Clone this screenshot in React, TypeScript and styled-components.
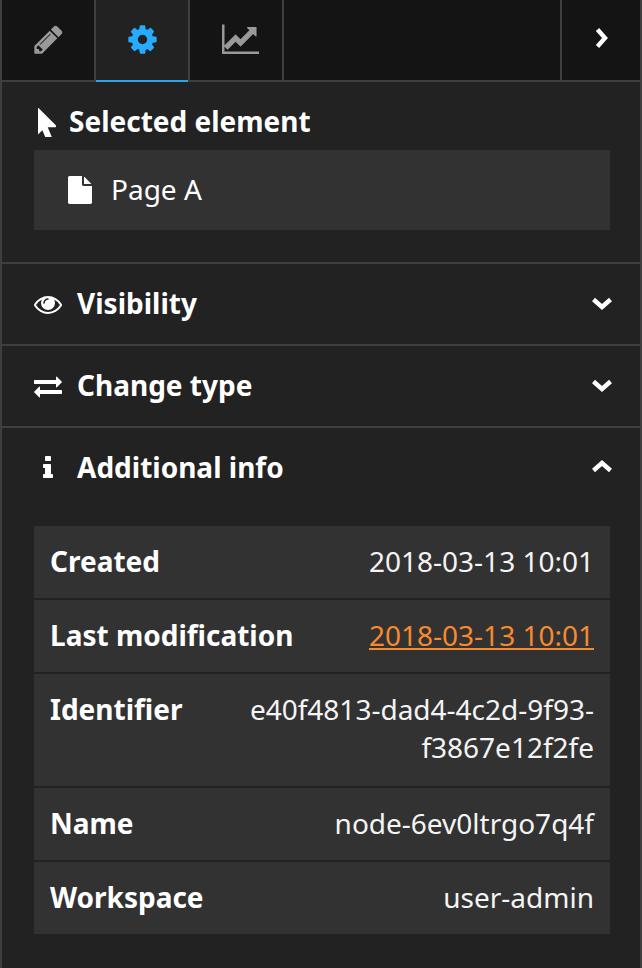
import React from "react";
import styled, { createGlobalStyle } from "styled-components";

const Global = createGlobalStyle`
  html, body { margin: 0; padding: 0; background: #222; }
  body { font-family: "Noto Sans", sans-serif; color: #fff; }
  * { box-sizing: border-box; }
`;

const Panel = styled.div`
  width: 642px;
  height: 968px;
  background: #222;
  border-left: 2px solid #3f3f3f;
  border-right: 2px solid #3f3f3f;
  overflow: hidden;
`;

const TabBar = styled.div`
  display: flex;
  height: 82px;
  background: #141414;
  border-bottom: 2px solid #3f3f3f;
`;

const Tab = styled.div<{ $active?: boolean }>`
  position: relative;
  width: 94px;
  height: 80px;
  padding-bottom: 2px;
  display: flex;
  align-items: center;
  justify-content: center;
  border-right: 2px solid #3f3f3f;
  background: ${(p) => (p.$active ? "#222" : "#141414")};
  color: ${(p) => (p.$active ? "#26acff" : "#999")};
  &::after {
    content: "";
    display: ${(p) => (p.$active ? "block" : "none")};
    position: absolute;
    left: 0;
    right: 0;
    bottom: -2px;
    height: 2px;
    background: #2aa5ea;
  }
`;

const TabSpacer = styled.div`
  flex: 1;
`;

const CollapseTab = styled.div`
  width: 80px;
  height: 80px;
  padding-bottom: 4px;
  display: flex;
  align-items: center;
  justify-content: center;
  border-left: 2px solid #3f3f3f;
  color: #fff;
`;

const ChartIcon = styled.svg`
  margin-left: 11px;
`;

const SelectedSection = styled.section`
  height: 182px;
  padding: 20px 30px 0 32px;
  border-bottom: 2px solid #3f3f3f;
`;

const SelectedHeader = styled.div`
  display: flex;
  align-items: center;
  height: 40px;
  font-size: 28px;
  font-weight: 700;
  line-height: 40px;
  color: #fff;
`;

const CursorIcon = styled.svg`
  margin: 0 13px 0 4px;
`;

const SelectedBox = styled.div`
  display: flex;
  align-items: center;
  height: 80px;
  margin-top: 8px;
  padding-left: 34px;
  background: #323232;
  font-size: 28px;
  color: #fff;
`;

const FileIcon = styled.svg`
  margin-right: 19px;
`;

const SectionHeader = styled.div<{ $last?: boolean }>`
  display: flex;
  align-items: center;
  height: ${(p) => (p.$last ? "80px" : "82px")};
  padding: 0 26px 0 32px;
  border-bottom: ${(p) => (p.$last ? "none" : "2px solid #3f3f3f")};
  font-size: 28px;
  font-weight: 700;
  color: #fff;
`;

const IconSlot = styled.span`
  width: 43px;
  display: flex;
  align-items: center;
`;

const RaisedText = styled.span`
  padding-bottom: 2px;
`;

const HeaderTitle = styled(RaisedText)`
  flex: 1;
`;

const ChevronSlot = styled.span`
  display: flex;
  padding-bottom: 2px;
`;

const Table = styled.div`
  width: 576px;
  margin: 18px 0 0 32px;
  background: #323232;
`;

const Row = styled.div<{ $tall?: boolean }>`
  display: flex;
  justify-content: space-between;
  padding: 16px 16px ${(p) => (p.$tall ? "20px" : "18px")} 16px;
  border-bottom: 2px solid #222;
  font-size: 28px;
  line-height: 38px;
  &:last-child { border-bottom: none; }
`;

const Label = styled.span`
  font-weight: 700;
  color: #fff;
  white-space: nowrap;
`;

const Value = styled.span<{ $changed?: boolean }>`
  text-align: right;
  white-space: nowrap;
  color: ${(p) => (p.$changed ? "#f7892e" : "#f4f4f4")};
  text-decoration: ${(p) => (p.$changed ? "underline" : "none")};
`;

const Glyph = ({ d, size, box = "0 0 1792 1792" }: { d: string; size: number; box?: string }) => (
  <svg width={size} height={size} viewBox={box} fill="currentColor" aria-hidden="true">
    <path d={d} />
  </svg>
);

const Chevron = ({ dir }: { dir: "right" | "down" | "up" }) => {
  const pts = {
    right: "8.5,3.5 16,12 8.5,20.5",
    down: "3.5,8.5 12,16 20.5,8.5",
    up: "3.5,15.5 12,8 20.5,15.5",
  }[dir];
  return (
    <svg width={24} height={24} viewBox="0 0 24 24" fill="none" stroke="currentColor" strokeWidth={4.4} aria-hidden="true">
      <polyline points={pts} />
    </svg>
  );
};

const PENCIL =
  "M491 1536l91-91-235-235-91 91v107h128v128h107zm523-928q0-22-22-22-10 0-17 7l-542 542q-7 7-7 17 0 22 22 22 10 0 17-7l542-542q7-7 7-17zm-54-192l416 416-832 832h-416v-416zm683 96q0 53-37 90l-166 166-416-416 166-165q36-38 90-38 53 0 91 38l235 234q37 39 37 91z";
const COG =
  "M1152 896q0-106-75-181t-181-75-181 75-75 181 75 181 181 75 181-75 75-181zm512-109v222q0 12-8 23t-20 13l-185 28q-19 54-39 91 35 50 107 138 10 12 10 25t-9 23q-27 37-99 108t-94 71q-12 0-26-9l-138-108q-44 23-91 38-16 136-29 186-7 28-36 28h-222q-14 0-24.5-8.5t-11.5-21.5l-28-184q-49-16-90-37l-141 107q-10 9-25 9-14 0-25-11-126-114-165-168-7-10-7-23 0-12 8-23 15-21 51-66.5t54-70.5q-27-50-41-99l-183-27q-13-2-21-12.5t-8-23.5v-222q0-12 8-23t19-13l186-28q14-46 39-92-40-57-107-138-10-12-10-24 0-10 9-23 26-36 98.5-107.5t94.5-71.5q13 0 26 10l138 107q44-23 91-38 16-136 29-186 7-28 36-28h222q14 0 24.5 8.5t11.5 21.5l28 184q49 16 90 37l142-107q9-9 24-9 13 0 25 10 129 119 165 170 7 8 7 22 0 12-8 23-15 21-51 66.5t-54 70.5q26 50 41 98l183 28q13 2 21 12.5t8 23.5z";
const CHART =
  "M1920 1536v128h-1920v-1536h128v1408h1792zm-128-1248v435q0 21-19.5 29.5t-35.5-7.5l-121-121-633 633q-10 10-23 10t-23-10l-233-233-416 416-192-192 585-585q10-10 23-10t23 10l233 233 464-464-121-121q-16-16-7.5-35.5t29.5-19.5h435q14 0 23 9t9 23z";
const CURSOR =
  "M1389 1043q31 30 14 69-17 40-59 40h-382l201 476q10 25 0 49t-34 35l-177 75q-25 10-49 0t-35-34l-191-452-312 312q-19 19-45 19-12 0-24-5-39-17-39-59v-1504q0-42 39-59 12-5 24-5 27 0 45 19z";
const FILE =
  "M1024 512v-472q22 14 36 28l408 408q14 14 28 36h-472zm-128 32q0 40 28 68t68 28h544v1056q0 40-28 68t-68 28h-1344q-40 0-68-28t-28-68v-1600q0-40 28-68t68-28h800v544z";
const EYE =
  "M1664 960q-152-236-381-353 61 104 61 225 0 185-131.5 316.5t-316.5 131.5-316.5-131.5-131.5-316.5q0-121 61-225-229 117-381 353 133 205 333.5 326.5t434.5 121.5 434.5-121.5 333.5-326.5zm-720-384q0-20-14-34t-34-14q-125 0-214.5 89.5t-89.5 214.5q0 20 14 34t34 14 34-14 14-34q0-86 61-147t147-61q20 0 34-14t14-34zm848 384q0 34-20 69-140 230-376.5 368.5t-499.5 138.5-499.5-139-376.5-368q-20-35-20-69t20-69q140-229 376.5-368t499.5-139 499.5 139 376.5 368q20 35 20 69z";
const EXCHANGE =
  "M1792 1184v192q0 13-9.5 22.5t-22.5 9.5h-1376v192q0 13-9.5 22.5t-22.5 9.5q-12 0-24-10l-319-320q-9-9-9-22 0-14 9-23l320-320q9-9 23-9 13 0 22.5 9.5t9.5 22.5v192h1376q13 0 22.5 9.5t9.5 22.5zm0-544q0 14-9 23l-320 320q-9 9-23 9-13 0-22.5-9.5t-9.5-22.5v-192h-1376q-13 0-22.5-9.5t-9.5-22.5v-192q0-13 9.5-22.5t22.5-9.5h1376v-192q0-14 9-23t23-9q12 0 24 10l319 319q9 9 9 23z";
const INFO =
  "M1216 1344v128q0 26-19 45t-45 19h-512q-26 0-45-19t-19-45v-128q0-26 19-45t45-19h64v-384h-64q-26 0-45-19t-19-45v-128q0-26 19-45t45-19h384q26 0 45 19t19 45v576h64q26 0 45 19t19 45zm-128-1152v192q0 26-19 45t-45 19h-256q-26 0-45-19t-19-45v-192q0-26 19-45t45-19h256q26 0 45 19t19 45z";

const rows: { label: string; value: React.ReactNode; changed?: boolean; tall?: boolean }[] = [
  { label: "Created", value: "2018-03-13 10:01" },
  { label: "Last modification", value: "2018-03-13 10:01", changed: true },
  { label: "Identifier", value: <>e40f4813-dad4-4c2d-9f93-<br />f3867e12f2fe</>, tall: true },
  { label: "Name", value: "node-6ev0ltrgo7q4f" },
  { label: "Workspace", value: "user-admin" },
];

export default function App() {
  return (
    <>
      <Global />
      <Panel>
        <TabBar>
          <Tab><Glyph d={PENCIL} size={33} /></Tab>
          <Tab $active><Glyph d={COG} size={33} /></Tab>
          <Tab>
            <ChartIcon width={39.5} height={34.5} viewBox="0 0 2048 1792" fill="currentColor">
              <path d={CHART} />
            </ChartIcon>
          </Tab>
          <TabSpacer />
          <CollapseTab><Chevron dir="right" /></CollapseTab>
        </TabBar>
        <SelectedSection>
          <SelectedHeader>
            <CursorIcon width={18} height={29} viewBox="448 128 952 1536" fill="currentColor">
              <path d={CURSOR} />
            </CursorIcon>
            <RaisedText>Selected element</RaisedText>
          </SelectedHeader>
          <SelectedBox>
            <FileIcon width={24} height={28} viewBox="0 0 1536 1792" fill="currentColor">
              <path d={FILE} />
            </FileIcon>
            <RaisedText>Page A</RaisedText>
          </SelectedBox>
        </SelectedSection>
        <SectionHeader>
          <IconSlot><Glyph d={EYE} size={28} /></IconSlot>
          <HeaderTitle>Visibility</HeaderTitle>
          <ChevronSlot><Chevron dir="down" /></ChevronSlot>
        </SectionHeader>
        <SectionHeader>
          <IconSlot><Glyph d={EXCHANGE} size={28} /></IconSlot>
          <HeaderTitle>Change type</HeaderTitle>
          <ChevronSlot><Chevron dir="down" /></ChevronSlot>
        </SectionHeader>
        <SectionHeader $last>
          <IconSlot><Glyph d={INFO} size={28} /></IconSlot>
          <HeaderTitle>Additional info</HeaderTitle>
          <ChevronSlot><Chevron dir="up" /></ChevronSlot>
        </SectionHeader>
        <Table>
          {rows.map((r) => (
            <Row key={r.label} $tall={r.tall}>
              <Label>{r.label}</Label>
              <Value $changed={r.changed}>{r.value}</Value>
            </Row>
          ))}
        </Table>
      </Panel>
    </>
  );
}
